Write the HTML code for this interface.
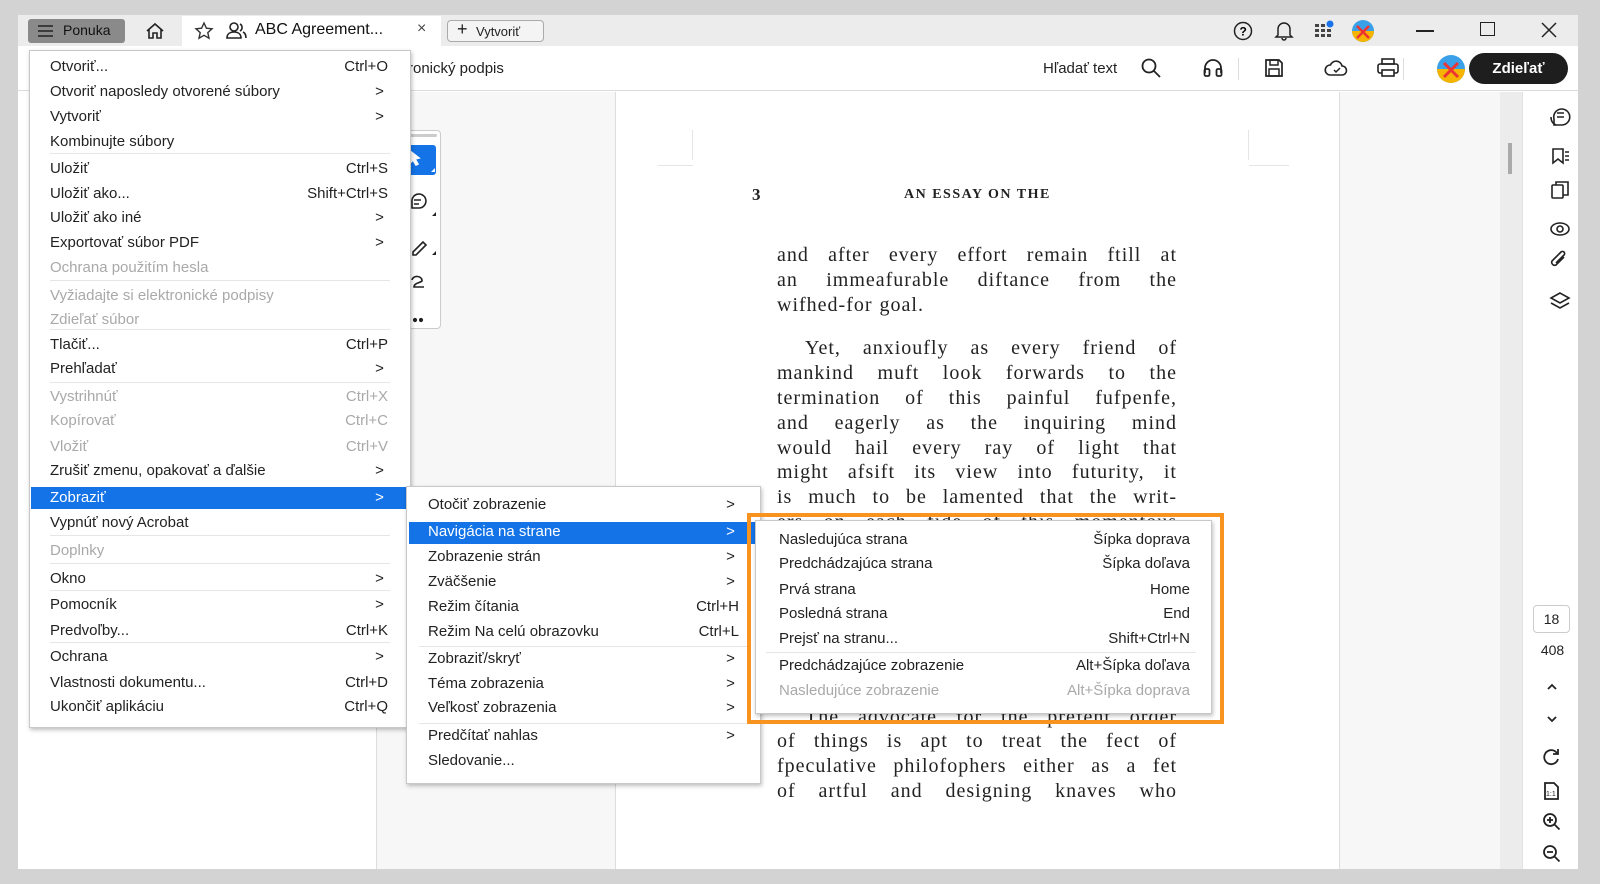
<!DOCTYPE html>
<html><head><meta charset="utf-8">
<style>
*{margin:0;padding:0;box-sizing:border-box}
body{width:1600px;height:884px;background:#d3d3d3;position:relative;overflow:hidden;font-family:"Liberation Sans",sans-serif;color:#222}
.abs{position:absolute}
.win{position:absolute;left:18px;top:15px;width:1560px;height:854px;background:#fff;overflow:hidden}
.title{position:absolute;left:0;top:0;width:1560px;height:31px;background:#ececec}
.tb{position:absolute;left:0;top:31px;width:1560px;height:45px;background:#fff;border-bottom:1px solid #dcdcdc}
.menu{position:absolute;background:#fff;border:1px solid #c8c8c8;box-shadow:1px 2px 4px rgba(0,0,0,.25)}
.it{position:absolute;height:24px;line-height:24px;font-size:15px;color:#222;white-space:nowrap}
.it.d{color:#a9a9a9}
.it .sc{position:absolute;right:0;top:0}
.hl{position:absolute;background:#1473e6}
.sep{position:absolute;height:1px;background:#e6e6e6}
.doc{position:absolute;left:777px;width:400px;font-family:"Liberation Serif",serif;font-size:20px;color:#222;text-align:justify;text-align-last:justify;height:25px;line-height:25px;white-space:nowrap;letter-spacing:1px;word-spacing:1px}
.ic{position:absolute}
</style></head><body>
<div class="win">
 <div class="title">
  <div class="abs" style="left:10px;top:4px;width:97px;height:24px;background:#8a8a8a;border-radius:3px"></div>
  <svg class="abs" style="left:18px;top:8px" width="20" height="16"><path d="M2 3h15M2 8h15M2 13h15" stroke="#222" stroke-width="1.6"/></svg>
  <div class="abs" style="left:45px;top:7px;font-size:14px;color:#111">Ponuka</div>
  <svg class="abs" style="left:126px;top:5px" width="22" height="22"><path d="M3 11L11 4l8 7M5 9v9h4v-5h4v5h4V9" fill="none" stroke="#222" stroke-width="1.6"/></svg>
  <div class="abs" style="left:164px;top:1px;width:259px;height:30px;background:#fff"></div>
  <svg class="abs" style="left:176px;top:6px" width="20" height="20"><path d="M10 2l2.4 5.2 5.6.6-4.2 3.8 1.2 5.6L10 14.3 5 17.2l1.2-5.6L2 7.8l5.6-.6z" fill="none" stroke="#333" stroke-width="1.4"/></svg>
  <svg class="abs" style="left:207px;top:5px" width="24" height="22"><circle cx="9" cy="7" r="4" fill="none" stroke="#222" stroke-width="1.6"/><path d="M2 18c0-4 3-6 7-6s7 2 7 6z M15 4a4 4 0 010 7M18 12c2 1 3 3 3 6" fill="none" stroke="#222" stroke-width="1.6"/></svg>
  <div class="abs" style="left:237px;top:6px;font-size:16px;color:#111">ABC Agreement...</div>
  <div class="abs" style="left:399px;top:5px;font-size:16px;color:#444">×</div>
  <div class="abs" style="left:429px;top:5px;width:97px;height:22px;border:1px solid #aaa;border-radius:4px;background:#f4f4f4"></div>
  <div class="abs" style="left:439px;top:4px;font-size:18px;color:#222">+</div>
  <div class="abs" style="left:458px;top:9px;font-size:13px;color:#222">Vytvoriť</div>
  <svg class="abs" style="left:1214px;top:5px" width="22" height="22"><circle cx="11" cy="11" r="8.5" fill="none" stroke="#222" stroke-width="1.5"/><text x="7.5" y="15.5" font-size="12" font-family="Liberation Sans" font-weight="bold">?</text></svg>
  <svg class="abs" style="left:1255px;top:4px" width="22" height="22"><path d="M5 16V10a6 6 0 0112 0v6l2 2H3z M9 19a2 2 0 004 0" fill="none" stroke="#222" stroke-width="1.5"/></svg>
  <svg class="abs" style="left:1294px;top:4px" width="24" height="22"><g fill="#444"><rect x="3" y="5" width="4" height="3"/><rect x="9" y="5" width="4" height="3"/><rect x="3" y="10" width="4" height="3"/><rect x="9" y="10" width="4" height="3"/><rect x="15" y="10" width="4" height="3"/><rect x="3" y="15" width="4" height="3"/><rect x="9" y="15" width="4" height="3"/><rect x="15" y="15" width="4" height="3"/></g><circle cx="18" cy="5" r="3.5" fill="#1a73e8"/></svg>
  <svg class="abs" style="left:1333px;top:4px" width="24" height="24"><circle cx="12" cy="12" r="11" fill="#3aa0e8"/><path d="M1 12a11 11 0 0022 0z" fill="#f4b400"/><path d="M6 19l12-12M6 7l12 12" stroke="#e33" stroke-width="2.5"/></svg>
  <div class="abs" style="left:1398px;top:15px;width:18px;height:1.5px;background:#222"></div>
  <div class="abs" style="left:1462px;top:7px;width:15px;height:14px;border:1.5px solid #222"></div>
  <svg class="abs" style="left:1521px;top:5px" width="20" height="20"><path d="M3 3l14 14M17 3L3 17" stroke="#222" stroke-width="1.5"/></svg>
 </div>
 <div class="tb">
  <div class="abs" style="left:390px;top:14px;font-size:15px;color:#222">ronický podpis</div>
  <div class="abs" style="left:1025px;top:14px;font-size:15px;color:#222">Hľadať text</div>
  <svg class="abs" style="left:1122px;top:11px" width="22" height="22"><circle cx="9" cy="9" r="6.5" fill="none" stroke="#222" stroke-width="1.8"/><path d="M14 14l6 6" stroke="#222" stroke-width="1.8"/></svg>
  <svg class="abs" style="left:1183px;top:11px" width="24" height="22"><path d="M4 16v-5a8 8 0 0116 0v5" fill="none" stroke="#222" stroke-width="1.8"/><rect x="3.5" y="12" width="5" height="7" rx="1.5" fill="none" stroke="#222" stroke-width="1.8"/><rect x="15.5" y="12" width="5" height="7" rx="1.5" fill="none" stroke="#222" stroke-width="1.8"/></svg>
  <div class="abs" style="left:1220px;top:12px;width:1px;height:22px;background:#ddd"></div>
  <svg class="abs" style="left:1245px;top:11px" width="22" height="22"><path d="M3 3h13l3 3v13H3z" fill="none" stroke="#222" stroke-width="1.7"/><rect x="7" y="3" width="8" height="5" fill="none" stroke="#222" stroke-width="1.5"/><rect x="6" y="12" width="10" height="7" fill="none" stroke="#222" stroke-width="1.5"/></svg>
  <svg class="abs" style="left:1305px;top:11px" width="26" height="22"><path d="M7 18h12a4.5 4.5 0 000-9 6 6 0 00-11.5-1A5 5 0 007 18" fill="none" stroke="#222" stroke-width="1.6"/><path d="M11 13l2 2 4-4" fill="none" stroke="#222" stroke-width="1.5"/></svg>
  <svg class="abs" style="left:1358px;top:11px" width="24" height="22"><rect x="6" y="2" width="12" height="5" fill="none" stroke="#222" stroke-width="1.6"/><rect x="2" y="7" width="20" height="9" rx="2" fill="none" stroke="#222" stroke-width="1.6"/><rect x="6" y="13" width="12" height="6" fill="#fff" stroke="#222" stroke-width="1.6"/></svg>
  <div class="abs" style="left:1385px;top:12px;width:1px;height:22px;background:#ddd"></div>
  <svg class="abs" style="left:1418px;top:8px" width="30" height="30"><circle cx="15" cy="15" r="14" fill="#3aa0e8"/><path d="M1 15a14 14 0 0028 0z" fill="#f4b400"/><path d="M8 23l14-14M8 9l14 14" stroke="#e33" stroke-width="3"/></svg>
  <div class="abs" style="left:1451px;top:7px;width:99px;height:31px;background:#1e1e1e;border-radius:16px;color:#fff;font-weight:bold;font-size:15px;text-align:center;line-height:31px">Zdieľať</div>
 </div>
 <!-- content -->
 <div class="abs" style="left:358px;top:77px;width:240px;height:777px;background:#f7f7f7;border-left:1px solid #ddd;border-right:1px solid #ddd"></div>
 <div class="abs" style="left:1321px;top:77px;width:161px;height:777px;background:#f7f7f7;border-left:1px solid #ddd"></div>
 <div class="abs" style="left:1482px;top:77px;width:22px;height:777px;background:#ececec"></div>
 <div class="abs" style="left:1490px;top:128px;width:4px;height:31px;background:#aaa"></div>
 <div class="abs" style="left:1504px;top:77px;width:56px;height:777px;background:#fff;border-left:1px solid #e2e2e2"></div>
 <!-- tool panel -->
 <div class="abs" style="left:370px;top:115px;width:53px;height:199px;background:#fff;border:1px solid #ccc;border-radius:4px"></div>
 <div class="abs" style="left:375px;top:119px;width:44px;height:3px;background:#ccc;border-radius:2px"></div>
 <div class="abs" style="left:382px;top:130px;width:36px;height:30px;background:#1473e6;border-radius:3px"></div>
 <svg class="ic" style="left:382px;top:130px" width="40" height="180" fill="none" stroke="#222" stroke-width="1.6">
  <path d="M10 6l9 7-4 1 3 5-2 1-3-5-3 3z" fill="#fff" stroke="#fff"/><path d="M31 27l4-4v4z" fill="#fff" stroke="none"/>
  <path d="M12 57a7 7 0 117 6h-7z"/><path d="M14 55h7M14 59h5"/><path d="M32 71l4-4v4z" fill="#222" stroke="none"/>
  <path d="M13 107l10-10 3 3-10 10h-3z"/><path d="M32 110l4-4v4z" fill="#222" stroke="none"/>
  <path d="M12 135a5 4 0 1110 1c-2 2-8 2-8 6h10"/>
  <circle cx="15" cy="175" r="1.3" fill="#222"/><circle cx="21" cy="175" r="1.3" fill="#222"/>
 </svg>
 <!-- page decorations -->
 <div class="abs" style="left:674px;top:115px;width:1px;height:30px;background:#e5e5e5"></div>
 <div class="abs" style="left:1230px;top:115px;width:1px;height:30px;background:#e5e5e5"></div>
 <div class="abs" style="left:640px;top:150px;width:35px;height:1px;background:#e5e5e5"></div>
 <div class="abs" style="left:1231px;top:150px;width:40px;height:1px;background:#e5e5e5"></div>
 <!-- right sidebar icons -->
 <svg class="ic" style="left:1530px;top:90px" width="24" height="220" fill="none" stroke="#222" stroke-width="1.6">
  <path d="M6 14a8 8 0 118 6H6z"/><path d="M9 8h7M9 12h7"/><path d="M3 12c0 4 2 7 5 8"/>
  <path d="M5 44V58l5-4 5 4V44z"/><path d="M17 47h4M17 51h4M17 55h4"/>
  <rect x="4" y="80" width="11" height="13" rx="1"/><path d="M8 80v-3h12v13h-5"/>
  <ellipse cx="12" cy="124" rx="9" ry="6"/><circle cx="12" cy="124" r="3"/>
  <path d="M16 152l-8 8a3 3 0 01-4-4l9-9a2 2 0 013 3l-8 8"/>
  <path d="M12 188l-9 5 9 5 9-5z"/><path d="M3 198l9 5 9-5"/>
 </svg>
 <div class="abs" style="left:1515px;top:590px;width:37px;height:28px;border:1px solid #ccc;border-radius:4px;text-align:center;line-height:27px;font-size:14px">18</div>
 <div class="abs" style="left:1516px;top:627px;width:37px;text-align:center;font-size:14px">408</div>
 <svg class="ic" style="left:1522px;top:660px" width="24" height="190" fill="none" stroke="#222" stroke-width="1.8">
  <path d="M8 14l4-4 4 4"/><path d="M8 42l4 4 4-4"/>
  <path d="M18 84a7 7 0 11-2-7l2 2M18 74v5h-5"/>
  <path d="M5 108h9l4 4v12H5z"/><text x="6" y="121" font-size="7" stroke="none" fill="#222" font-family="Liberation Sans">1:1</text>
  <circle cx="10" cy="145" r="6"/><path d="M14.5 149.5l5 5M7 145h6M10 142v6"/>
  <circle cx="10" cy="177" r="6"/><path d="M14.5 181.5l5 5M7 177h6"/>
 </svg>
 <!-- document text -->
 <div class="abs" style="left:734px;top:170px;font-family:'Liberation Serif',serif;font-size:17px;font-weight:bold;color:#222">3</div>
 <div class="abs" style="left:886px;top:172px;font-family:'Liberation Serif',serif;font-size:14px;font-weight:bold;letter-spacing:1.5px;color:#222">AN ESSAY ON THE</div>
 <div class="doc" style="left:759px;top:228px">and after every effort remain ftill at</div>
 <div class="doc" style="left:759px;top:253px">an immeafurable diftance from the</div>
 <div class="doc" style="left:759px;top:278px;text-align-last:left">wifhed-for goal.</div>
 <div class="doc" style="left:759px;top:321px;padding-left:28px">Yet, anxioufly as every friend of</div>
 <div class="doc" style="left:759px;top:346px">mankind muft look forwards to the</div>
 <div class="doc" style="left:759px;top:371px">termination of this painful fufpenfe,</div>
 <div class="doc" style="left:759px;top:396px">and eagerly as the inquiring mind</div>
 <div class="doc" style="left:759px;top:421px">would hail every ray of light that</div>
 <div class="doc" style="left:759px;top:445px">might afsift its view into futurity, it</div>
 <div class="doc" style="left:759px;top:470px">is much to be lamented that the writ-</div>
 <div class="doc" style="left:759px;top:495px">ers on each fide of this momentous</div>
 <div class="doc" style="left:759px;top:690px;padding-left:28px">The advocate for the prefent order</div>
 <div class="doc" style="left:759px;top:714px">of things is apt to treat the fect of</div>
 <div class="doc" style="left:759px;top:739px">fpeculative philofophers either as a fet</div>
 <div class="doc" style="left:759px;top:764px">of artful and designing knaves who</div>
</div>

<!-- main menu -->
<div class="menu" style="left:29px;top:50px;width:382px;height:678px">
 <div class="hl" style="left:1px;top:436px;width:379px;height:22px"></div>
 <div class="sep" style="left:20px;top:102px;width:340px"></div>
 <div class="sep" style="left:20px;top:229px;width:340px"></div>
 <div class="sep" style="left:20px;top:278px;width:340px"></div>
 <div class="sep" style="left:20px;top:331px;width:340px"></div>
 <div class="sep" style="left:20px;top:484px;width:340px"></div>
 <div class="sep" style="left:20px;top:512px;width:340px"></div>
 <div class="sep" style="left:20px;top:539px;width:340px"></div>
 <div class="sep" style="left:20px;top:591px;width:340px"></div>
</div>
<div class="abs" style="left:50px;top:2px;width:338px">
 <div class="it" style="top:53px;width:338px">Otvoriť...<span class="sc">Ctrl+O</span></div>
 <div class="it" style="top:78px;width:338px">Otvoriť naposledy otvorené súbory<span class="sc">&gt;&nbsp;</span></div>
 <div class="it" style="top:103px;width:338px">Vytvoriť<span class="sc">&gt;&nbsp;</span></div>
 <div class="it" style="top:128px;width:338px">Kombinujte súbory</div>
 <div class="it" style="top:155px;width:338px">Uložiť<span class="sc">Ctrl+S</span></div>
 <div class="it" style="top:180px;width:338px">Uložiť ako...<span class="sc">Shift+Ctrl+S</span></div>
 <div class="it" style="top:204px;width:338px">Uložiť ako iné<span class="sc">&gt;&nbsp;</span></div>
 <div class="it" style="top:229px;width:338px">Exportovať súbor PDF<span class="sc">&gt;&nbsp;</span></div>
 <div class="it d" style="top:254px;width:338px">Ochrana použitím hesla</div>
 <div class="it d" style="top:282px;width:338px">Vyžiadajte si elektronické podpisy</div>
 <div class="it d" style="top:306px;width:338px">Zdieľať súbor</div>
 <div class="it" style="top:331px;width:338px">Tlačiť...<span class="sc">Ctrl+P</span></div>
 <div class="it" style="top:355px;width:338px">Prehľadať<span class="sc">&gt;&nbsp;</span></div>
 <div class="it d" style="top:383px;width:338px">Vystrihnúť<span class="sc">Ctrl+X</span></div>
 <div class="it d" style="top:407px;width:338px">Kopírovať<span class="sc">Ctrl+C</span></div>
 <div class="it d" style="top:433px;width:338px">Vložiť<span class="sc">Ctrl+V</span></div>
 <div class="it" style="top:457px;width:338px">Zrušiť zmenu, opakovať a ďalšie<span class="sc">&gt;&nbsp;</span></div>
 <div class="it" style="top:484px;width:338px;color:#fff">Zobraziť<span class="sc">&gt;&nbsp;</span></div>
 <div class="it" style="top:509px;width:338px">Vypnúť nový Acrobat</div>
 <div class="it d" style="top:537px;width:338px">Doplnky</div>
 <div class="it" style="top:565px;width:338px">Okno<span class="sc">&gt;&nbsp;</span></div>
 <div class="it" style="top:591px;width:338px">Pomocník<span class="sc">&gt;&nbsp;</span></div>
 <div class="it" style="top:617px;width:338px">Predvoľby...<span class="sc">Ctrl+K</span></div>
 <div class="it" style="top:643px;width:338px">Ochrana<span class="sc">&gt;&nbsp;</span></div>
 <div class="it" style="top:669px;width:338px">Vlastnosti dokumentu...<span class="sc">Ctrl+D</span></div>
 <div class="it" style="top:693px;width:338px">Ukončiť aplikáciu<span class="sc">Ctrl+Q</span></div>
</div>

<!-- submenu 1 -->
<div class="menu" style="left:406px;top:486px;width:355px;height:298px">
 <div class="hl" style="left:2px;top:35px;width:350px;height:22px"></div>
 <div class="sep" style="left:12px;top:159px;width:330px"></div>
 <div class="sep" style="left:12px;top:236px;width:330px"></div>
</div>
<div class="abs" style="left:428px;top:1px;width:311px">
 <div class="it" style="top:492px;width:311px">Otočiť zobrazenie<span class="sc">&gt;&nbsp;</span></div>
 <div class="it" style="top:519px;width:311px;color:#fff">Navigácia na strane<span class="sc">&gt;&nbsp;</span></div>
 <div class="it" style="top:544px;width:311px">Zobrazenie strán<span class="sc">&gt;&nbsp;</span></div>
 <div class="it" style="top:569px;width:311px">Zväčšenie<span class="sc">&gt;&nbsp;</span></div>
 <div class="it" style="top:594px;width:311px">Režim čítania<span class="sc">Ctrl+H</span></div>
 <div class="it" style="top:619px;width:311px">Režim Na celú obrazovku<span class="sc">Ctrl+L</span></div>
 <div class="it" style="top:646px;width:311px">Zobraziť/skryť<span class="sc">&gt;&nbsp;</span></div>
 <div class="it" style="top:671px;width:311px">Téma zobrazenia<span class="sc">&gt;&nbsp;</span></div>
 <div class="it" style="top:695px;width:311px">Veľkosť zobrazenia<span class="sc">&gt;&nbsp;</span></div>
 <div class="it" style="top:723px;width:311px">Predčítať nahlas<span class="sc">&gt;&nbsp;</span></div>
 <div class="it" style="top:748px;width:311px">Sledovanie...</div>
</div>

<!-- submenu 2 -->
<div class="abs" style="left:747px;top:513px;width:477px;height:211px;border:4px solid #f7931e"></div>
<div class="menu" style="left:755px;top:520px;width:457px;height:194px">
 <div class="sep" style="left:10px;top:131px;width:430px"></div>
</div>
<div class="abs" style="left:779px;top:1px;width:411px">
 <div class="it" style="top:527px;width:411px">Nasledujúca strana<span class="sc">Šípka doprava</span></div>
 <div class="it" style="top:551px;width:411px">Predchádzajúca strana<span class="sc">Šípka doľava</span></div>
 <div class="it" style="top:577px;width:411px">Prvá strana<span class="sc">Home</span></div>
 <div class="it" style="top:601px;width:411px">Posledná strana<span class="sc">End</span></div>
 <div class="it" style="top:626px;width:411px">Prejsť na stranu...<span class="sc">Shift+Ctrl+N</span></div>
 <div class="it" style="top:653px;width:411px">Predchádzajúce zobrazenie<span class="sc">Alt+Šípka doľava</span></div>
 <div class="it d" style="top:678px;width:411px">Nasledujúce zobrazenie<span class="sc">Alt+Šípka doprava</span></div>
</div>
</body></html>
